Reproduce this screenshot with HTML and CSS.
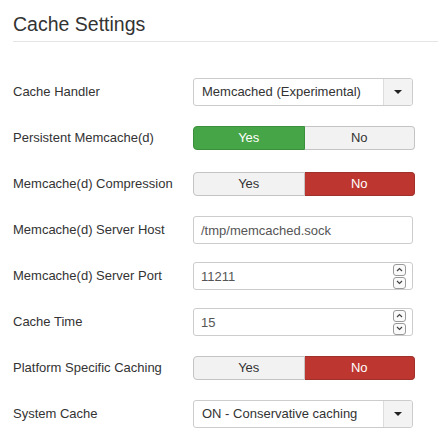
FILE: index.html
```html
<!DOCTYPE html>
<html>
<head>
<meta charset="utf-8">
<link rel="stylesheet" href="styles.css">
</head>
<body>
<div class="panel">
  <h2 class="legend">Cache Settings</h2>
  <div class="rows">
    <div class="row">
      <div class="label">Cache Handler</div>
      <div class="select">
        <span class="select-text">Memcached (Experimental)</span>
        <span class="select-btn"><span class="caret"></span></span>
      </div>
    </div>
    <div class="row">
      <div class="label">Persistent Memcache(d)</div>
      <div class="toggle">
        <span class="opt yes-on">Yes</span>
        <span class="opt off">No</span>
      </div>
    </div>
    <div class="row">
      <div class="label">Memcache(d) Compression</div>
      <div class="toggle">
        <span class="opt off">Yes</span>
        <span class="opt no-on">No</span>
      </div>
    </div>
    <div class="row">
      <div class="label">Memcache(d) Server Host</div>
      <div class="input"><span class="input-text">/tmp/memcached.sock</span></div>
    </div>
    <div class="row">
      <div class="label">Memcache(d) Server Port</div>
      <div class="input">
        <span class="input-text">11211</span>
        <span class="spin">
          <span class="spin-btn"><svg width="7" height="5" viewBox="0 0 7 5"><path d="M1 4 L3.5 1.5 L6 4" fill="none" stroke="#444" stroke-width="1.2"/></svg></span>
          <span class="spin-btn"><svg width="7" height="5" viewBox="0 0 7 5"><path d="M1 1 L3.5 3.5 L6 1" fill="none" stroke="#444" stroke-width="1.2"/></svg></span>
        </span>
      </div>
    </div>
    <div class="row">
      <div class="label">Cache Time</div>
      <div class="input">
        <span class="input-text">15</span>
        <span class="spin">
          <span class="spin-btn"><svg width="7" height="5" viewBox="0 0 7 5"><path d="M1 4 L3.5 1.5 L6 4" fill="none" stroke="#444" stroke-width="1.2"/></svg></span>
          <span class="spin-btn"><svg width="7" height="5" viewBox="0 0 7 5"><path d="M1 1 L3.5 3.5 L6 1" fill="none" stroke="#444" stroke-width="1.2"/></svg></span>
        </span>
      </div>
    </div>
    <div class="row">
      <div class="label">Platform Specific Caching</div>
      <div class="toggle">
        <span class="opt off">Yes</span>
        <span class="opt no-on">No</span>
      </div>
    </div>
    <div class="row">
      <div class="label">System Cache</div>
      <div class="select">
        <span class="select-text">ON - Conservative caching</span>
        <span class="select-btn"><span class="caret"></span></span>
      </div>
    </div>
  </div>
</div>
</body>
</html>
```

FILE: styles.css
```css
html, body {
  margin: 0;
  padding: 0;
  background: #fff;
}
body {
  font-family: "Liberation Sans", Arial, sans-serif;
  font-size: 13px;
  color: #333;
}
.panel {
  padding-left: 13px;
}
.legend {
  margin: 0;
  padding-top: 12px;
  padding-bottom: 5px;
  font-size: 19.5px;
  line-height: 24px;
  font-weight: normal;
  color: #333;
  border-bottom: 1px solid #e5e5e5;
  margin-bottom: 27px;
}
.rows {
  display: flex;
  flex-direction: column;
}
.row {
  display: flex;
  align-items: center;
  height: 46px;
}
.label {
  width: 180px;
  line-height: 18px;
}
.select {
  box-sizing: border-box;
  width: 220px;
  height: 28px;
  border: 1px solid #ccc;
  border-radius: 3px;
  display: flex;
  align-items: stretch;
  background: #fff;
}
.select-text {
  flex: 1;
  padding-left: 8px;
  line-height: 26px;
  color: #333;
}
.select-btn {
  width: 28px;
  border-left: 1px solid #ddd;
  background: #f3f3f3;
  display: flex;
  align-items: center;
  justify-content: center;
  border-radius: 0 3px 3px 0;
}
.caret {
  width: 0;
  height: 0;
  border-left: 4px solid transparent;
  border-right: 4px solid transparent;
  border-top: 4px solid #222;
}
.toggle {
  box-sizing: border-box;
  width: 222px;
  height: 24px;
  display: flex;
}
.opt {
  flex: 1;
  box-sizing: border-box;
  text-align: center;
  line-height: 22px;
  border: 1px solid #bbb;
}
.opt:first-child {
  border-radius: 4px 0 0 4px;
}
.opt:last-child {
  border-radius: 0 4px 4px 0;
  border-left: none;
}
.off {
  background: #f2f2f2;
  color: #333;
  border-color: #c4c4c4;
}
.yes-on {
  background: #46a546;
  border-color: #3b8f3b;
  color: #fff;
}
.no-on {
  background: #bd362f;
  border-color: #a0302a;
  color: #fff;
}
.input {
  box-sizing: border-box;
  width: 220px;
  height: 28px;
  border: 1px solid #ccc;
  border-radius: 3px;
  display: flex;
  align-items: center;
  background: #fff;
}
.input-text {
  flex: 1;
  padding-left: 7px;
  color: #555;
}
.spin {
  display: flex;
  flex-direction: column;
  gap: 1px;
  margin-right: 6px;
}
.spin-btn {
  box-sizing: border-box;
  width: 13px;
  height: 12px;
  border: 1px solid #9a9a9a;
  border-radius: 3px;
  background: #fafafa;
  display: flex;
  align-items: center;
  justify-content: center;
}
```
